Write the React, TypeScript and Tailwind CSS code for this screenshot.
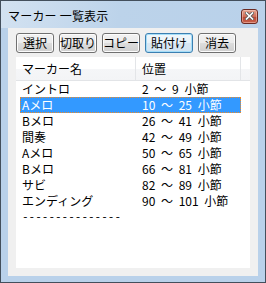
const buttons = [
	{ label: "選択", width: "w-[38px]", active: false },
	{ label: "切取り", width: "w-[38px]", active: false },
	{ label: "コピー", width: "w-[38px]", active: false },
	{ label: "貼付け", width: "w-[48px]", active: true },
	{ label: "消去", width: "w-[38px]", active: false },
];

const markers = [
	{ name: "イントロ", range: "2 ～ 9 小節" },
	{ name: "Aメロ", range: "10 ～ 25 小節" },
	{ name: "Bメロ", range: "26 ～ 41 小節" },
	{ name: "間奏", range: "42 ～ 49 小節" },
	{ name: "Aメロ", range: "50 ～ 65 小節" },
	{ name: "Bメロ", range: "66 ～ 81 小節" },
	{ name: "サビ", range: "82 ～ 89 小節" },
	{ name: "エンディング", range: "90 ～ 101 小節" },
];

const selectedIndex = 1;

const CloseButton = () => (
	<div className="flex h-[15px] w-[17px] items-center justify-center rounded-[3px] border border-[#6b2a22] bg-[linear-gradient(to_bottom,#e3a592,#cf6d57_50%,#b84633_51%,#c9624c)] shadow-[inset_0_0_0_1px_rgba(255,220,210,0.45)]">
		<svg width="9" height="8" viewBox="0 0 9 8">
			<path d="M1.5 1 L7.5 7 M7.5 1 L1.5 7" stroke="#5c5c5c" strokeWidth="3.2" strokeLinecap="square" />
			<path d="M1.5 1 L7.5 7 M7.5 1 L1.5 7" stroke="#ffffff" strokeWidth="1.6" strokeLinecap="square" />
		</svg>
	</div>
);

const App = () => {
	return (
		<div className="flex h-[283px] w-[266px] flex-col border border-[#434f5c] bg-[#b9d1ea] font-['Noto_Sans_CJK_JP',sans-serif] text-[12px] leading-[16px] text-black">
			{/* title bar */}
			<div className="flex h-[27px] shrink-0 items-center justify-between bg-[linear-gradient(100deg,#d3e2f1,#bcd3ea_45%,#b9d1ea)] pl-[7px] pr-[7px]">
				<span className="pt-[3px] tracking-[0.2px]">マーカー 一覧表示</span>
				<div className="pt-[3px]">
					<CloseButton />
				</div>
			</div>

			{/* client area */}
			<div className="mx-[7px] mb-[6px] flex flex-1 flex-col bg-[#f0f0f0] px-[8px] pb-[8px] pt-[5px]">
				<div className="flex h-[20px] gap-[5px]">
					{buttons.map((b) => (
						<button
							key={b.label}
							className={
								b.active
									? `${b.width} flex h-[20px] items-center justify-center rounded-[3px] border border-[#3c7fb1] bg-[linear-gradient(to_bottom,#f2f8fc,#e6f1f9_50%,#d8e7f3_51%,#d3e4f1)] shadow-[inset_0_0_0_1px_#a6def8] text-[12px] leading-[16px]`
									: `${b.width} flex h-[20px] items-center justify-center rounded-[3px] border border-[#707070] bg-[linear-gradient(to_bottom,#f2f2f2,#ebebeb_50%,#dddddd_51%,#cfcfcf)] shadow-[inset_0_0_0_1px_#fcfcfc] text-[12px] leading-[16px]`
							}
						>
							{b.label}
						</button>
					))}
				</div>

				{/* list view */}
				<div className="mt-[4px] flex flex-1 flex-col bg-white">
					<div className="flex h-[24px] shrink-0 border-b border-[#e2e4e7] bg-[linear-gradient(to_bottom,#ffffff,#ffffff_50%,#f5f6f8_51%,#f3f4f6)]">
						<div className="flex w-[120px] items-center border-r border-[#e3e5e8] pl-[6px]">マーカー名</div>
						<div className="flex w-[105px] items-center border-r border-[#e3e5e8] pl-[6px]">位置</div>
						<div className="flex-1" />
					</div>
					<div className="flex flex-col">
						{markers.map((m, i) => (
							<div
								key={i}
								className={
									i === selectedIndex
										? "ml-[4px] flex h-[16px] w-[221px] items-center border border-dotted border-[#f08a24] bg-[#3399ff] text-white"
										: "ml-[4px] flex h-[16px] w-[221px] items-center border border-transparent"
								}
							>
								<span className="w-[119px] pl-[1px]">{m.name}</span>
								<span className="whitespace-pre pl-[2px] [word-spacing:3px]">{m.range}</span>
							</div>
						))}
						<div className="ml-[6px] flex h-[16px] items-center font-['Liberation_Mono',monospace] text-[11px]">
							---------------
						</div>
					</div>
				</div>
			</div>
		</div>
	);
};

export default App;
